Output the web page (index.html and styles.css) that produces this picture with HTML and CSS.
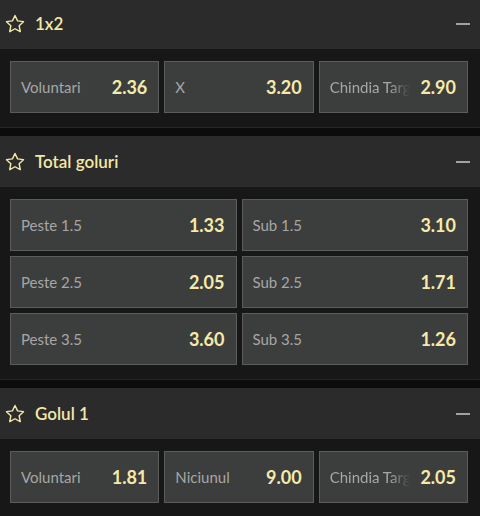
FILE: index.html
```html
<!DOCTYPE html>
<html lang="ro">
<head>
<meta charset="utf-8">
<link rel="stylesheet" href="styles.css">
</head>
<body>
<div class="page">
  <section class="market">
    <div class="market-head">
      <svg class="star" viewBox="0 0 24 24" width="20" height="20"><path d="M12 1.8l3.1 6.5 7.1.9-5.2 4.9 1.3 7.1L12 17.7l-6.3 3.5 1.3-7.1-5.2-4.9 7.1-.9z" fill="none" stroke="currentColor" stroke-width="1.7" stroke-linejoin="round"/></svg>
      <span class="title">1x2</span>
      <span class="minus"></span>
    </div>
    <div class="market-body cols-3">
      <div class="odd"><span class="label">Voluntari</span><span class="price">2.36</span></div>
      <div class="odd"><span class="label">X</span><span class="price">3.20</span></div>
      <div class="odd"><span class="label fade">Chindia Targoviste</span><span class="price">2.90</span></div>
    </div>
  </section>
  <section class="market">
    <div class="market-head">
      <svg class="star" viewBox="0 0 24 24" width="20" height="20"><path d="M12 1.8l3.1 6.5 7.1.9-5.2 4.9 1.3 7.1L12 17.7l-6.3 3.5 1.3-7.1-5.2-4.9 7.1-.9z" fill="none" stroke="currentColor" stroke-width="1.7" stroke-linejoin="round"/></svg>
      <span class="title">Total goluri</span>
      <span class="minus"></span>
    </div>
    <div class="market-body cols-2">
      <div class="odd"><span class="label">Peste 1.5</span><span class="price">1.33</span></div>
      <div class="odd"><span class="label">Sub 1.5</span><span class="price">3.10</span></div>
      <div class="odd"><span class="label">Peste 2.5</span><span class="price">2.05</span></div>
      <div class="odd"><span class="label">Sub 2.5</span><span class="price">1.71</span></div>
      <div class="odd"><span class="label">Peste 3.5</span><span class="price">3.60</span></div>
      <div class="odd"><span class="label">Sub 3.5</span><span class="price">1.26</span></div>
    </div>
  </section>
  <section class="market">
    <div class="market-head">
      <svg class="star" viewBox="0 0 24 24" width="20" height="20"><path d="M12 1.8l3.1 6.5 7.1.9-5.2 4.9 1.3 7.1L12 17.7l-6.3 3.5 1.3-7.1-5.2-4.9 7.1-.9z" fill="none" stroke="currentColor" stroke-width="1.7" stroke-linejoin="round"/></svg>
      <span class="title">Golul 1</span>
      <span class="minus"></span>
    </div>
    <div class="market-body cols-3">
      <div class="odd"><span class="label">Voluntari</span><span class="price">1.81</span></div>
      <div class="odd"><span class="label">Niciunul</span><span class="price">9.00</span></div>
      <div class="odd"><span class="label fade">Chindia Targoviste</span><span class="price">2.05</span></div>
    </div>
  </section>
</div>
</body>
</html>
```
FILE: styles.css
```css
html, body {
  margin: 0;
  padding: 0;
  background: #0c0c0c;
  font-family: Lato, "Open Sans", Arial, sans-serif;
  overflow: hidden;
}
.page {
  margin-top: -2px;
  display: flex;
  flex-direction: column;
  gap: 8px;
}
.market {
  background: #171717;
  border-bottom: 1px solid #242424;
}
.market-head {
  height: 51px;
  background: #2b2b2b;
  display: flex;
  align-items: center;
  padding: 0 10px 0 5px;
  color: #f4e8a8;
}
.star {
  display: block;
  flex: none;
}
.title {
  margin-left: 10px;
  font-size: 17px;
  font-weight: 600;
  color: #f4e8a8;
  flex: 1;
}
.minus {
  width: 14px;
  height: 2px;
  background: #a2a2a2;
}
.market-body {
  display: grid;
  gap: 5px;
  padding: 12px 12px 14px 10px;
}
.cols-3 { grid-template-columns: repeat(3, 1fr); }
.cols-2 { grid-template-columns: repeat(2, 1fr); }
.odd {
  height: 50px;
  background: #3c3e3d;
  border: 1px solid #5b5c5b;
  display: flex;
  align-items: center;
  justify-content: space-between;
  padding: 0 11px 0 10px;
  gap: 10px;
  min-width: 0;
}
.label {
  font-size: 15px;
  color: #a6a6a6;
  white-space: nowrap;
  overflow: hidden;
  min-width: 0;
}
.fade {
  -webkit-mask-image: linear-gradient(to right, #000 75%, transparent 100%);
  mask-image: linear-gradient(to right, #000 75%, transparent 100%);
}
.price {
  font-size: 18px;
  font-weight: 700;
  color: #f6eaa9;
  flex: none;
}
```
